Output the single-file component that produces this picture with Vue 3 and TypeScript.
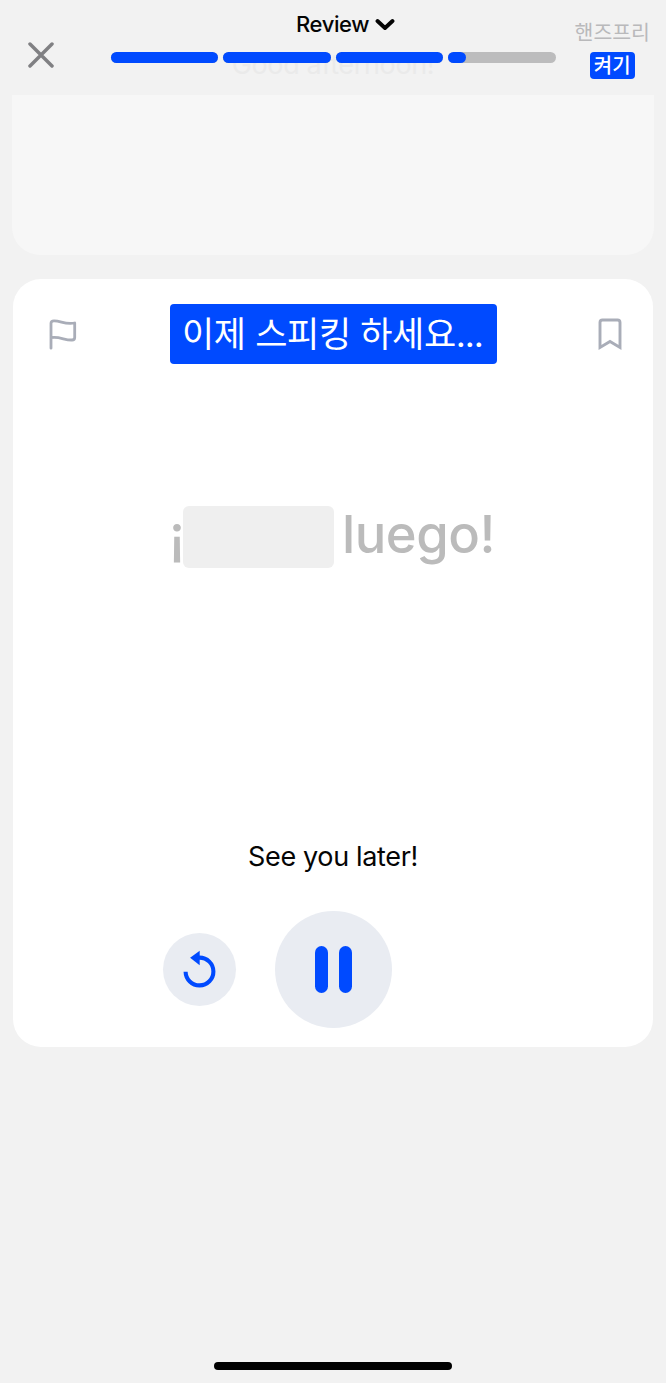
<script setup lang="ts">
const segments: number[] = [100, 100, 100, 17]
</script>

<template>
  <div class="screen">
    <header class="header">
      <button class="plain close" aria-label="Close">
        <svg width="26" height="26" viewBox="0 0 26 26">
          <path d="M2 2 24 24M24 2 2 24" fill="none" stroke="#808083" stroke-width="3.5" stroke-linecap="round" />
        </svg>
      </button>
      <div class="progress-area">
        <div class="title">
          <span class="title-text">Review</span>
          <svg width="20" height="13" viewBox="0 0 20 13">
            <path d="M2.5 3 10 10 17.5 3" fill="none" stroke="#050505" stroke-width="3.9" stroke-linecap="round" stroke-linejoin="round" />
          </svg>
        </div>
        <div class="segments">
          <div v-for="(value, i) in segments" :key="i" class="segment">
            <div class="fill" :style="{ width: value + '%' }"></div>
          </div>
        </div>
        <div class="ghost">Good afternoon!</div>
      </div>
      <div class="handsfree">
        <span class="handsfree-label">핸즈프리</span>
        <span class="handsfree-toggle">켜기</span>
      </div>
    </header>

    <section class="previous"></section>

    <section class="card">
      <div class="card-top">
        <svg class="flag" width="28" height="31" viewBox="0 0 28 31">
          <path d="M2 29.2V4.2C2 2.4 3.2 1.8 5 1.8 12 1.7 16 6 25.700 4V18.4C25.7 20 24.8 20.9 23 21 16 21.4 10.500 17.300 2 18.700" fill="none" stroke="#a9adb8" stroke-width="2.8" stroke-linecap="round" stroke-linejoin="round" />
        </svg>
        <div class="banner"><span class="banner-text">이제 스피킹 하세요<span class="dots">...</span></span></div>
        <svg class="bookmark" width="24" height="33" viewBox="0 0 24 33">
          <path d="M2 29.500V4.500Q2 2 4.500 2H19.500Q22 2 22 4.500V29.500L12 23.500Z" fill="none" stroke="#a9adb8" stroke-width="2.9" />
        </svg>
      </div>

      <div class="phrase">
        <span class="open">¡</span>
        <span class="blank"></span>
        <span class="word">luego!</span>
      </div>

      <div class="translation">See you later!</div>

      <div class="controls">
        <button class="plain round replay" aria-label="Replay">
          <svg width="36" height="40" viewBox="0 0 36 40">
            <path d="M3.600 21.700A13.900 13.900 0 1 0 17.500 7.600H15" fill="none" stroke="#004aff" stroke-width="4.100" />
            <path d="M8.100 7.700 17.700 0.800V15.200Z" fill="#004aff" />
          </svg>
        </button>
        <button class="plain round pause" aria-label="Pause">
          <span class="bar"></span>
          <span class="bar"></span>
        </button>
      </div>
    </section>

    <div class="home-indicator"></div>
  </div>
</template>

<style>
body {
  background: #f2f2f2;
}
</style>

<style scoped>
.screen {
  box-sizing: border-box;
  display: flex;
  flex-direction: column;
  width: 666px;
  height: 1383px;
  overflow: hidden;
  background: #f2f2f2;
  color: #050505;
  font-family: Inter, "Noto Sans CJK KR", "Liberation Sans", sans-serif;
}
.screen svg {
  display: block;
  flex: none;
}
.plain {
  border: 0;
  padding: 0;
  background: none;
}
.header {
  display: flex;
  height: 95px;
}
.close {
  flex: none;
  box-sizing: border-box;
  width: 110.5px;
  height: 26px;
  margin-top: 42px;
  padding-left: 27.5px;
}
.close svg {
  width: 26px;
}
.progress-area {
  flex: none;
  position: relative;
  width: 445px;
}
.title {
  display: flex;
  align-items: center;
  gap: 6px;
  height: 28px;
  margin: 10px 0 14px 185.5px;
}
.title-text {
  width: 73px;
  font-size: 22px;
  line-height: 28px;
  font-weight: 500;
  letter-spacing: -0.4px;
  white-space: nowrap;
}
.segments {
  position: relative;
  z-index: 1;
  display: flex;
  gap: 5px;
}
.segment {
  flex: 1;
  height: 11px;
  border-radius: 6px;
  background: #bcbcbd;
}
.fill {
  height: 100%;
  border-radius: 6px;
  background: #004aff;
}
.ghost {
  position: absolute;
  top: 49px;
  left: 0;
  width: 100%;
  text-align: center;
  font-size: 27px;
  line-height: 32px;
  letter-spacing: -0.35px;
  color: #eaeaea;
}
.handsfree {
  display: flex;
  flex: 1;
  flex-direction: column;
  align-items: center;
  padding: 18px 0 0 3px;
}
.handsfree-label {
  height: 34px;
  font-size: 20.5px;
  line-height: 29px;
  color: #b9b9bb;
  white-space: nowrap;
}
.handsfree-toggle {
  width: 45px;
  height: 27px;
  border-radius: 4px;
  background: #004aff;
  color: #fff;
  font-size: 20px;
  line-height: 28px;
  font-weight: 500;
  text-align: center;
}
.previous {
  height: 160px;
  margin: 0 12px 24px;
  border-radius: 0 0 28px 28px;
  background: #f7f7f7;
}
.card {
  height: 768px;
  margin: 0 13px;
  border-radius: 28px;
  background: #fff;
}
.card-top {
  display: flex;
  align-items: center;
  padding: 25px 31px 0 35.5px;
}
.banner {
  width: 327px;
  height: 60px;
  margin: 0 auto 0 93.5px;
  border-radius: 4px;
  background: #004aff;
}
.banner-text {
  display: block;
  padding-left: 12px;
  color: #fff;
  font-size: 35px;
  line-height: 61px;
  letter-spacing: -0.35px;
  white-space: nowrap;
}
.dots {
  letter-spacing: -1.1px;
}
.phrase {
  display: flex;
  align-items: center;
  height: 62px;
  margin: 142px 0 0 156px;
  color: #bbb;
  font-size: 52.5px;
  line-height: 56px;
  font-weight: 500;
}
.open {
  width: 14px;
  height: 62px;
}
.blank {
  width: 151px;
  height: 62px;
  border-radius: 6px;
  background: #efefef;
}
.word {
  height: 62px;
  margin-left: 8px;
  letter-spacing: -0.5px;
}
.translation {
  margin-top: 272px;
  text-align: center;
  font-size: 27px;
  line-height: 34px;
  letter-spacing: -0.35px;
}
.controls {
  display: flex;
  align-items: center;
  gap: 39px;
  margin: 37px 0 0 150px;
}
.round {
  display: flex;
  align-items: center;
  justify-content: center;
  border-radius: 50%;
  background: #e9ecf2;
}
.replay {
  width: 73px;
  height: 73px;
}
.pause {
  gap: 11px;
  width: 117px;
  height: 117px;
}
.bar {
  width: 13px;
  height: 47px;
  border-radius: 7px;
  background: #004aff;
}
.home-indicator {
  width: 238px;
  height: 8px;
  margin: auto auto 13px;
  border-radius: 4px;
  background: #000;
}
</style>
